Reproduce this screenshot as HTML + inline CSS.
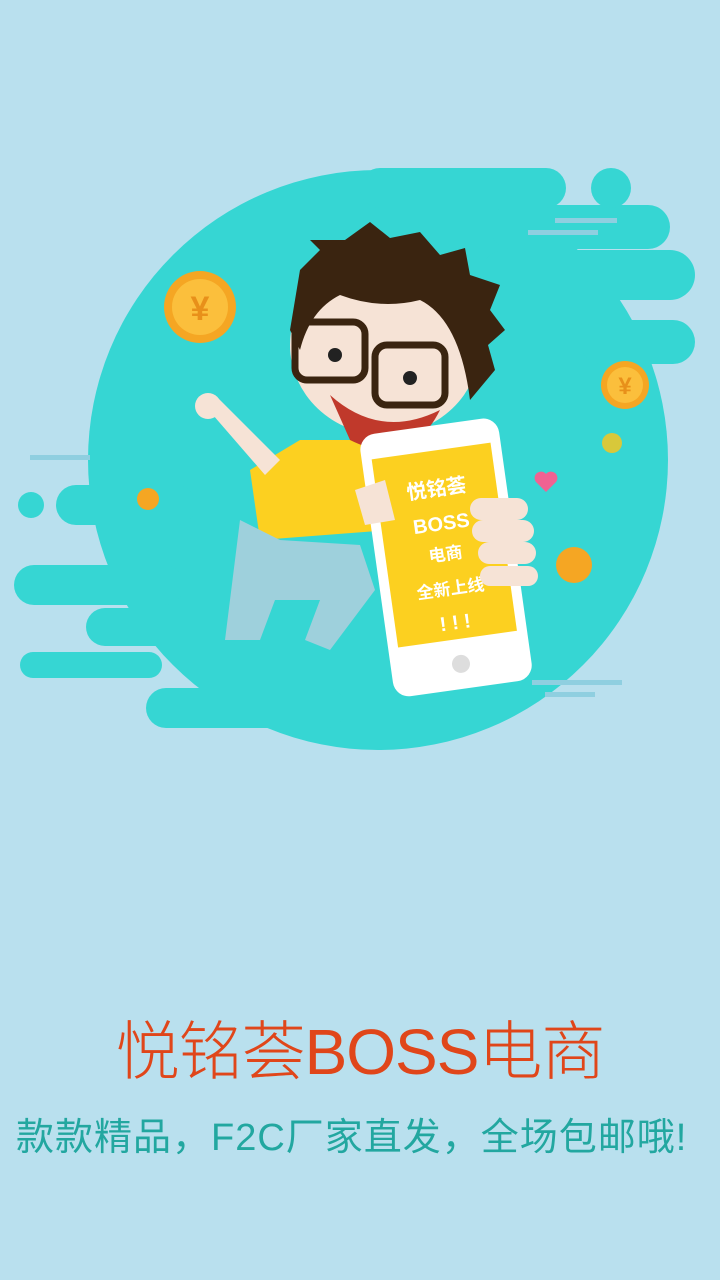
<!DOCTYPE html>
<html><head><meta charset="utf-8"><style>
html,body{margin:0;padding:0}
body{width:720px;height:1280px;background:#b9e0ee;position:relative;overflow:hidden;font-family:"Liberation Sans","Noto Sans CJK SC",sans-serif}
.t1{position:absolute;left:0;width:720px;top:1012px;text-align:center;font-size:64px;color:#e0461a;font-weight:300;letter-spacing:-1px;line-height:80px}
.t2{position:absolute;left:16px;top:1112px;font-size:38px;color:#22a7a0;white-space:nowrap;line-height:52px;letter-spacing:1px}
</style></head><body>
<svg width="720" height="1000" style="position:absolute;left:0;top:0">
<g fill="#36d6d3">
<circle cx="378" cy="460" r="290"/>
<rect x="20" y="652" width="142" height="26" rx="13"/>
<rect x="146" y="688" width="200" height="40" rx="20"/>
<rect x="86" y="608" width="160" height="38" rx="19"/>
<rect x="14" y="565" width="170" height="40" rx="20"/>
<rect x="56" y="485" width="140" height="40" rx="20"/>
<rect x="490" y="205" width="180" height="44" rx="22"/>
<rect x="480" y="250" width="215" height="50" rx="25"/>
<rect x="580" y="320" width="115" height="44" rx="22"/>
<rect x="360" y="168" width="206" height="40" rx="20"/>
<circle cx="611" cy="188" r="20"/>
<circle cx="31" cy="505" r="13"/>
</g>
<g fill="#8fcfe0"><rect x="528" y="230" width="70" height="5"/><rect x="555" y="218" width="62" height="5"/><rect x="30" y="455" width="60" height="5"/><rect x="532" y="680" width="90" height="5"/><rect x="545" y="692" width="50" height="5"/></g>
<g>
<circle cx="200" cy="307" r="36" fill="#f5a623"/><circle cx="200" cy="307" r="28" fill="#fbbf3c"/><text x="200" y="320" font-size="34" text-anchor="middle" fill="#e8901a" font-weight="bold">¥</text>
<circle cx="625" cy="385" r="24" fill="#f5a623"/><circle cx="625" cy="385" r="18" fill="#fbbf3c"/><text x="625" y="394" font-size="24" text-anchor="middle" fill="#e8901a" font-weight="bold">¥</text>
<circle cx="574" cy="565" r="18" fill="#f5a623"/><circle cx="148" cy="499" r="11" fill="#f5a623"/><circle cx="612" cy="443" r="10" fill="#d8c83a"/>
</g>
<path d="M540 480 l6 -6 a5 5 0 0 1 10 8 l-10 10 -10 -10 a5 5 0 0 1 10 -8z" fill="#f06292"/>
<path d="M250 470 L300 440 L380 440 L390 530 L260 540 Z" fill="#fcd020"/>
<path d="M240 520 L280 540 L360 545 L375 590 L330 650 L305 640 L320 600 L275 600 L260 640 L225 640 Z" fill="#9ed0dc"/>
<path d="M200 400 L215 395 L280 460 L265 475 Z" fill="#f6e3d6"/>
<circle cx="208" cy="406" r="13" fill="#f6e3d6"/>
<ellipse cx="385" cy="345" rx="95" ry="90" fill="#f6e3d6"/>
<path d="M290 330 L300 270 L320 250 L310 240 L345 240 L370 222 L390 238 L420 232 L440 255 L465 248 L470 275 L500 285 L490 310 L505 330 L488 345 L495 370 L470 400 Q460 320 420 300 Q380 310 340 295 Q310 310 300 350 Z" fill="#3a2410"/>
<path d="M330 395 Q380 440 440 410 Q410 470 350 440 Z" fill="#c0392b"/>
<rect x="295" y="322" width="70" height="58" rx="12" fill="none" stroke="#3a2410" stroke-width="7"/>
<rect x="375" y="345" width="70" height="60" rx="12" fill="none" stroke="#3a2410" stroke-width="7"/>
<circle cx="335" cy="355" r="7" fill="#222"/><circle cx="410" cy="378" r="7" fill="#222"/>
<g transform="rotate(-8 445 550)">
<rect x="375" y="425" width="140" height="265" rx="16" fill="#fff"/>
<rect x="385" y="450" width="120" height="190" fill="#fcd020"/>
<circle cx="445" cy="665" r="9" fill="#ddd"/>
<g fill="#fff" font-weight="bold" font-size="20" text-anchor="middle"><text x="445" y="495">悦铭荟</text><text x="445" y="530">BOSS</text><text x="445" y="560" font-size="17">电商</text><text x="445" y="595" font-size="17">全新上线</text><text x="445" y="630">! ! !</text></g>
</g>
<g fill="#f6e3d6"><rect x="470" y="498" width="58" height="22" rx="11"/><rect x="472" y="520" width="62" height="22" rx="11"/><rect x="478" y="542" width="58" height="22" rx="11"/><rect x="480" y="566" width="58" height="20" rx="10"/><path d="M355 490 L385 480 L395 520 L365 525Z"/></g>
</svg>
<div class="t1">悦铭荟BOSS电商</div>
<div class="t2">款款精品，F2C厂家直发，全场包邮哦!</div>
</body></html>
